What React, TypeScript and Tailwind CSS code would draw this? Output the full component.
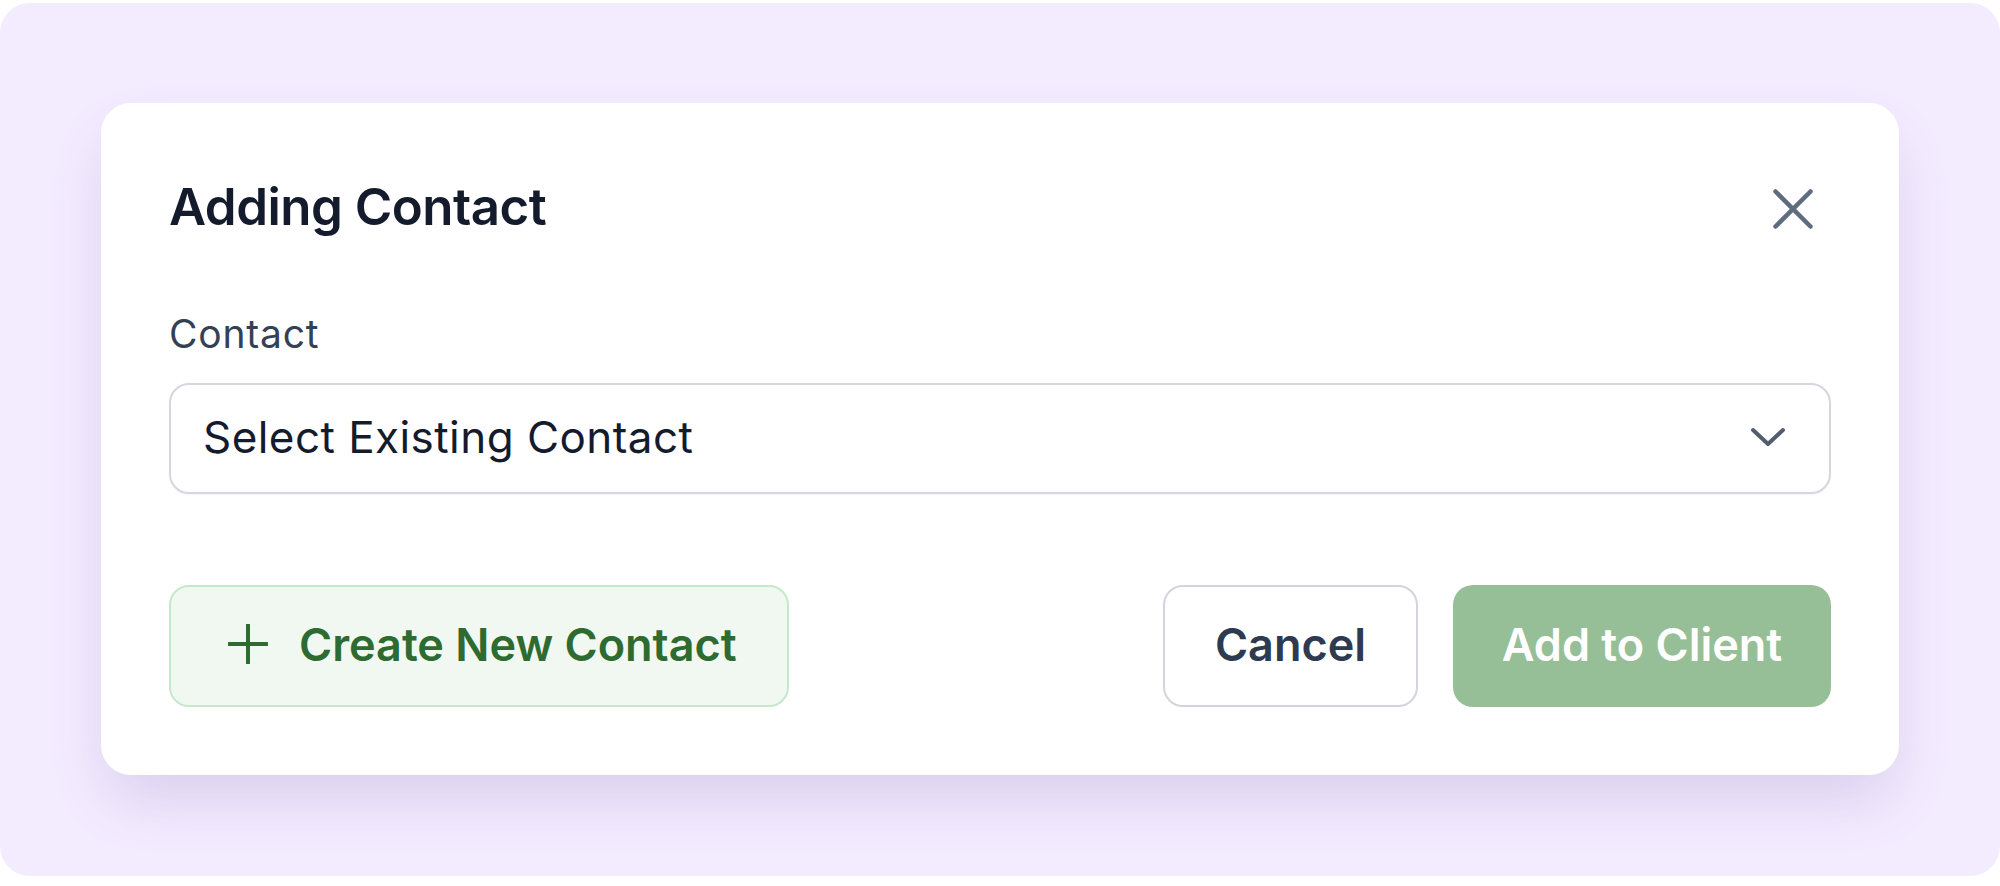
import React from 'react';

const FONT = { fontFamily: 'Inter, "Noto Sans", sans-serif' };

function CloseIcon() {
  return (
    <svg width="40" height="40" viewBox="0 0 40 40" fill="none" stroke="#5f6b80" strokeWidth="4.5" strokeLinecap="round">
      <path d="M2.5 2.5 L37.5 37.5 M37.5 2.5 L2.5 37.5" />
    </svg>
  );
}

function Chevron() {
  return (
    <svg width="34" height="20" viewBox="0 0 34 20" fill="none" stroke="#525d70" strokeWidth="4" strokeLinecap="round" strokeLinejoin="round">
      <path d="M2 3 L17 17 L32 3" />
    </svg>
  );
}

function PlusIcon() {
  return (
    <svg width="40" height="40" viewBox="0 0 40 40" fill="none" stroke="#2e6b30" strokeWidth="4" strokeLinecap="round">
      <path d="M20 1 L20 39 M1 20 L39 20" />
    </svg>
  );
}

export default function App() {
  return (
    <div className="bg-white w-[2000px] h-[886px] pt-[3px]" style={FONT}>
      <div className="bg-[#f3ebfe] rounded-[30px] h-[873px] px-[101px] pt-[100px]">
        <div className="bg-white rounded-[30px] shadow-[0_30px_60px_-10px_rgba(110,80,170,0.2)] px-[68px] pt-[78px] pb-[68px]">
          {/* Header */}
          <div className="flex items-center justify-between h-[51px]">
            <h2 className="text-[51px] leading-none font-semibold tracking-[-0.01em] text-[#141b2d]">Adding Contact</h2>
            <button className="mr-[18px] mt-[5px]">
              <CloseIcon />
            </button>
          </div>

          {/* Field */}
          <div className="mt-[83px] h-[38px] text-[39px] leading-[38px] text-[#344054] tracking-[0.02em]">Contact</div>
          <div className="mt-[30px] h-[111px] rounded-[20px] border-2 border-[#d6d6e0] flex items-center justify-between pl-[32px] pr-[44px] pb-[4px] shadow-[0_1px_2px_rgba(0,0,0,0.04)]">
            <span className="text-[44px] leading-none text-[#141b2d] tracking-[0.01em]">Select Existing Contact</span>
            <Chevron />
          </div>

          {/* Actions */}
          <div className="mt-[91px] flex items-center justify-between">
            <button className="w-[620px] h-[122px] rounded-[20px] border-2 border-[#c6e8c9] bg-[#f1f8f2] flex items-center pl-[57px] pb-[4px] gap-[31px]">
              <PlusIcon />
              <span className="text-[45px] leading-none font-semibold text-[#2e6b30]">Create New Contact</span>
            </button>
            <div className="flex items-center gap-[35px]">
              <button className="w-[255px] h-[122px] rounded-[20px] border-2 border-[#d4d4de] bg-white flex items-center justify-center pb-[4px]">
                <span className="text-[45px] leading-none font-semibold text-[#2d3a4f]">Cancel</span>
              </button>
              <button className="w-[378px] h-[122px] rounded-[20px] bg-[#97bf97] flex items-center justify-center pb-[4px]">
                <span className="text-[45px] leading-none font-semibold text-white">Add to Client</span>
              </button>
            </div>
          </div>
        </div>
      </div>
    </div>
  );
}
